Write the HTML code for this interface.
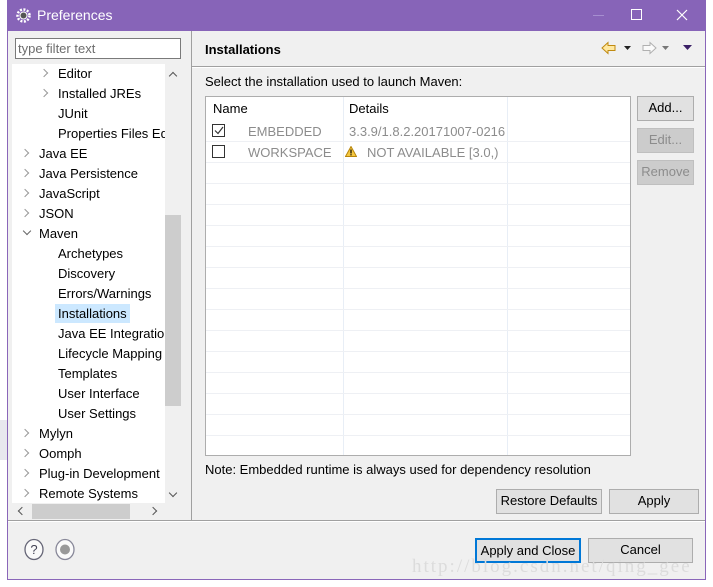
<!DOCTYPE html>
<html><head><style>
*{margin:0;padding:0;box-sizing:border-box}
body{width:713px;height:587px;background:#fff;font-family:"Liberation Sans",sans-serif;font-size:13px;color:#000;position:relative;overflow:hidden}
.a{position:absolute}
.win{left:7px;top:0;width:699px;height:580px;background:#f0f0f0;border:1px solid #8a66b9;border-top:none}
.title{left:7px;top:0;width:699px;height:31px;background:#8764b8;color:#fff;font-size:14px}
.t{position:absolute;white-space:nowrap;line-height:20px}
.btn{position:absolute;background:#e1e1e1;border:1px solid #adadad;text-align:center;line-height:22px;font-size:13px}
.dis{color:#8c8c8c;background:#cccccc;border-color:#bfbfbf}
.ch{position:absolute;width:6px;height:6px;border-right:1.4px solid #999;border-bottom:1.4px solid #999;transform:rotate(-45deg)}
.cd{position:absolute;width:6px;height:6px;border-right:1.4px solid #666;border-bottom:1.4px solid #666;transform:rotate(45deg)}
</style></head><body>
<div class="a" style="left:0;top:420px;width:7px;height:40px;background:#e8e8ee"></div>
<div class="a win"></div>
<div class="a title">
 <svg class="a" style="left:9px;top:8px" width="15" height="15" viewBox="0 0 15 15"><circle cx="7.5" cy="7.5" r="6" fill="none" stroke="#fff" stroke-width="2.5" stroke-dasharray="2 1.5"/><circle cx="7.5" cy="7.5" r="3.5" fill="#555" stroke="#fff"/></svg>
 <div class="t" style="left:30px;top:5px">Preferences</div>
 <div class="a" style="left:586px;top:15px;width:11px;height:1px;background:#a68ed0"></div>
 <div class="a" style="left:624px;top:9px;width:11px;height:11px;border:1px solid #fff"></div>
 <svg class="a" style="left:669px;top:9px" width="12" height="12"><path d="M1 1L11 11M11 1L1 11" stroke="#fff" stroke-width="1.2"/></svg>
</div>
<!-- left panel -->
<div class="a" style="left:15px;top:38px;width:166px;height:21px;background:#fff;border:1px solid #7a7a7a"></div>
<div class="t" style="left:18px;top:39px;color:#6d6d6d">type filter text</div>
<div class="a" style="left:12px;top:64px;width:153px;height:439px;background:#fff"></div>
<div class="a" style="left:165px;top:64px;width:16px;height:439px;background:#f0f0f0"></div>
<div class="a" style="left:165px;top:215px;width:16px;height:191px;background:#cdcdcd"></div>
<div class="ch" style="left:170px;top:73px;transform:rotate(-135deg);border-color:#555"></div>
<div class="cd" style="left:170px;top:490px;border-color:#555"></div>
<div class="a" style="left:12px;top:503px;width:169px;height:17px;background:#f0f0f0"></div>
<div class="a" style="left:32px;top:504px;width:98px;height:15px;background:#cdcdcd"></div>
<div class="ch" style="left:19px;top:508px;transform:rotate(135deg);border-color:#555"></div>
<div class="ch" style="left:150px;top:508px;border-color:#555"></div>
<div class="a" style="left:55px;top:304px;width:75px;height:19px;background:#cce8ff"></div>
<div style="position:absolute;left:0;top:64px;width:165px;height:439px;overflow:hidden">
<div class="ch" style="left:41px;top:6px"></div><div class="t" style="left:58px;top:0">Editor</div>
<div class="ch" style="left:41px;top:26px"></div><div class="t" style="left:58px;top:20px">Installed JREs</div>
<div class="t" style="left:58px;top:40px">JUnit</div>
<div class="t" style="left:58px;top:60px">Properties Files Editor</div>
<div class="ch" style="left:22px;top:86px"></div><div class="t" style="left:39px;top:80px">Java EE</div>
<div class="ch" style="left:22px;top:106px"></div><div class="t" style="left:39px;top:100px">Java Persistence</div>
<div class="ch" style="left:22px;top:126px"></div><div class="t" style="left:39px;top:120px">JavaScript</div>
<div class="ch" style="left:22px;top:146px"></div><div class="t" style="left:39px;top:140px">JSON</div>
<div class="cd" style="left:24px;top:164px"></div><div class="t" style="left:39px;top:160px">Maven</div>
<div class="t" style="left:58px;top:180px">Archetypes</div>
<div class="t" style="left:58px;top:200px">Discovery</div>
<div class="t" style="left:58px;top:220px">Errors/Warnings</div>
<div class="t" style="left:58px;top:240px">Installations</div>
<div class="t" style="left:58px;top:260px">Java EE Integration</div>
<div class="t" style="left:58px;top:280px">Lifecycle Mapping</div>
<div class="t" style="left:58px;top:300px">Templates</div>
<div class="t" style="left:58px;top:320px">User Interface</div>
<div class="t" style="left:58px;top:340px">User Settings</div>
<div class="ch" style="left:22px;top:366px"></div><div class="t" style="left:39px;top:360px">Mylyn</div>
<div class="ch" style="left:22px;top:386px"></div><div class="t" style="left:39px;top:380px">Oomph</div>
<div class="ch" style="left:22px;top:406px"></div><div class="t" style="left:39px;top:400px">Plug-in Development</div>
<div class="ch" style="left:22px;top:426px"></div><div class="t" style="left:39px;top:420px">Remote Systems</div>
</div>
<div class="a" style="left:191px;top:31px;width:1px;height:489px;background:#a0a0a0"></div>
<div class="a" style="left:8px;top:520px;width:697px;height:1px;background:#a0a0a0"></div>
<div class="a" style="left:8px;top:521px;width:697px;height:1px;background:#fff"></div>
<!-- right -->
<div class="t" style="left:205px;top:40px;font-weight:bold;font-size:13px">Installations</div>
<div class="a" style="left:192px;top:66px;width:513px;height:1px;background:#a0a0a0"></div>
<div class="a" style="left:192px;top:67px;width:513px;height:1px;background:#fff"></div>
<svg class="a" style="left:600px;top:41px" width="95" height="14"><path d="M2 7L8 1.5V4.5H15V9.5H8V12.5Z" fill="#ffe8a0" stroke="#c08a10"/><path d="M24 5h7l-3.5 4z" fill="#222"/><path d="M56 7L50 1.5V4.5H43V9.5H50V12.5Z" fill="#fafafa" stroke="#b0b0b0"/><path d="M62 5h7l-3.5 4z" fill="#777"/><path d="M83 4h9l-4.5 5z" fill="#3a1f66"/></svg>
<div class="t" style="left:205px;top:72px">Select the installation used to launch Maven:</div>
<div class="a" style="left:205px;top:96px;width:426px;height:360px;background:#fff;border:1px solid #adadad"></div>
<div class="a" style="left:343px;top:97px;width:1px;height:358px;background:#e8eef6"></div>
<div class="a" style="left:507px;top:97px;width:1px;height:358px;background:#e8eef6"></div>
<div style="position:absolute;left:206px;top:121px;width:424px">
 <div style="height:21px;border-bottom:1px solid #eef0f4"></div><div style="height:21px;border-bottom:1px solid #eef0f4"></div><div style="height:21px;border-bottom:1px solid #eef0f4"></div><div style="height:21px;border-bottom:1px solid #eef0f4"></div><div style="height:21px;border-bottom:1px solid #eef0f4"></div><div style="height:21px;border-bottom:1px solid #eef0f4"></div><div style="height:21px;border-bottom:1px solid #eef0f4"></div><div style="height:21px;border-bottom:1px solid #eef0f4"></div><div style="height:21px;border-bottom:1px solid #eef0f4"></div><div style="height:21px;border-bottom:1px solid #eef0f4"></div><div style="height:21px;border-bottom:1px solid #eef0f4"></div><div style="height:21px;border-bottom:1px solid #eef0f4"></div><div style="height:21px;border-bottom:1px solid #eef0f4"></div><div style="height:21px;border-bottom:1px solid #eef0f4"></div><div style="height:21px;border-bottom:1px solid #eef0f4"></div>
</div>
<div class="t" style="left:213px;top:99px">Name</div>
<div class="t" style="left:349px;top:99px">Details</div>
<div class="a" style="left:212px;top:124px;width:13px;height:13px;border:1px solid #333;background:#fff"></div>
<svg class="a" style="left:214px;top:126px" width="10" height="9"><path d="M1 4.5L4 7.5L9 1" stroke="#333" fill="none" stroke-width="1.2"/></svg>
<div class="a" style="left:212px;top:145px;width:13px;height:13px;border:1px solid #333;background:#fff"></div>
<div class="t" style="left:248px;top:122px;color:#8c8c8c">EMBEDDED</div>
<div class="t" style="left:349px;top:122px;color:#8c8c8c">3.3.9/1.8.2.20171007-0216</div>
<div class="t" style="left:248px;top:143px;color:#8c8c8c">WORKSPACE</div>
<svg class="a" style="left:345px;top:146px" width="12" height="11"><path d="M6 0.5L11.5 10.5H0.5Z" fill="#f5c842" stroke="#b8860b"/><rect x="5.4" y="3.5" width="1.2" height="4" fill="#000"/><rect x="5.4" y="8.2" width="1.2" height="1.2" fill="#000"/></svg>
<div class="t" style="left:367px;top:143px;color:#8c8c8c">NOT AVAILABLE [3.0,)</div>
<div class="btn" style="left:637px;top:96px;width:57px;height:25px">Add...</div>
<div class="btn dis" style="left:637px;top:128px;width:57px;height:25px">Edit...</div>
<div class="btn dis" style="left:637px;top:160px;width:57px;height:25px">Remove</div>
<div class="t" style="left:205px;top:460px">Note: Embedded runtime is always used for dependency resolution</div>
<div class="btn" style="left:496px;top:489px;width:106px;height:25px">Restore Defaults</div>
<div class="btn" style="left:609px;top:489px;width:90px;height:25px">Apply</div>
<svg class="a" style="left:23px;top:538px" width="60" height="24"><ellipse cx="11" cy="11.5" rx="9" ry="10" fill="#fafafa" stroke="#667" stroke-width="1.3"/><text x="11" y="16" font-size="13" text-anchor="middle" fill="#445" font-family="Liberation Sans">?</text><ellipse cx="42" cy="11.5" rx="9" ry="10" fill="#fafafa" stroke="#889" stroke-width="1.3"/><circle cx="42" cy="11.5" r="5" fill="#999"/></svg>
<div class="btn" style="left:475px;top:538px;width:106px;height:25px;border:2px solid #0078d7;line-height:21px">Apply and Close</div>
<div class="btn" style="left:588px;top:538px;width:105px;height:25px">Cancel</div>
<div class="t" style="left:412px;top:557px;font-family:'Liberation Serif',serif;font-size:19px;color:#dcdcdc;letter-spacing:2px">http://blog.csdn.net/qing_gee</div>
</body></html>
